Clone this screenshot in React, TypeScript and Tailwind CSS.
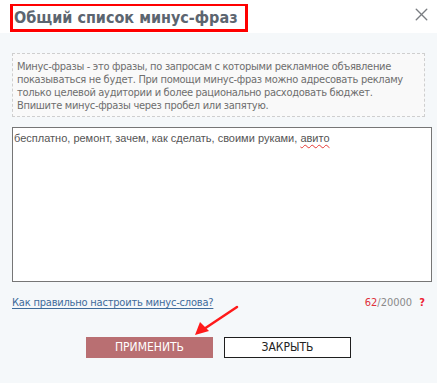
import { X } from "lucide-react";

const tahoma = { fontFamily: '"DejaVu Sans Condensed", "DejaVu Sans", sans-serif' };

export default function App() {
  return (
    <div className="relative w-[437px] h-[383px] flex flex-col bg-[#f5f8fa] overflow-hidden" style={tahoma}>
      {/* Header */}
      <div className="h-[33px] bg-white flex items-start justify-between">
        <div className="ml-[10px] mt-[4px] w-[238px] h-[28px] border-[3px] border-t-2 border-[#ff0000] flex items-center pl-[1px]">
          <h1 className="text-[16px] font-bold text-[#5c6570] leading-none whitespace-nowrap">Общий список минус-фраз</h1>
        </div>
        <button className="mt-[4px] mr-[5px] text-[#7a7d82]">
          <X size={21} strokeWidth={1.6} />
        </button>
      </div>

      {/* Body */}
      <div className="flex-1 flex flex-col px-[12px] pt-[20px] text-[11px]">
        <div className="w-[413px] h-[64px] border border-dashed border-[#cfcfcf] bg-[#f9f9f9] px-[4px] pt-[6px] leading-[13px] tracking-[-0.3px] text-[#6e6e6e]">
          Минус-фразы - это фразы, по запросам с которыми рекламное объявление показываться не будет. При помощи минус-фраз можно адресовать рекламу только целевой аудитории и более рационально расходовать бюджет. Впишите минус-фразы через пробел или запятую.
        </div>

        <div
          className="mt-[10px] w-[420px] h-[155px] border border-[#767676] bg-white px-[1px] pt-[3px] text-[11px] leading-[14px] text-[#555]"
          style={{ fontFamily: '"Liberation Sans", Arial, sans-serif' }}
        >
          бесплатно, ремонт, зачем, как сделать, своими руками,{" "}
          <span className="underline decoration-wavy decoration-[#e53935] decoration-1 underline-offset-2">авито</span>
        </div>

        <div className="mt-[13px] flex items-center justify-between w-[413px]">
          <a href="#" className="text-[#3e6b9a] underline underline-offset-2 tracking-[-0.2px]">Как правильно настроить минус-слова?</a>
          <span className="text-[#8a8a8a]">
            <span className="text-[#e0303a]">62</span>/20000 <span className="ml-[4px] font-bold text-[#ee2233]">?</span>
          </span>
        </div>

        <div className="mt-[25px] flex gap-[11px] pl-[74px]">
          <button className="w-[127px] h-[21px] bg-[#b96f72] text-white text-[12px] leading-none uppercase">Применить</button>
          <button className="w-[127px] h-[21px] bg-white border border-[#1e1e1e] text-[#222] text-[12px] leading-none uppercase">Закрыть</button>
        </div>
      </div>

      {/* Annotation arrow */}
      <svg className="absolute left-0 top-0 pointer-events-none" width="437" height="383">
        <line x1="237" y1="307" x2="204" y2="329" stroke="#ff1a1a" strokeWidth="2.5" strokeLinecap="round" />
        <polygon points="195,335 200,322 209,331" fill="#ff1a1a" />
      </svg>
    </div>
  );
}
